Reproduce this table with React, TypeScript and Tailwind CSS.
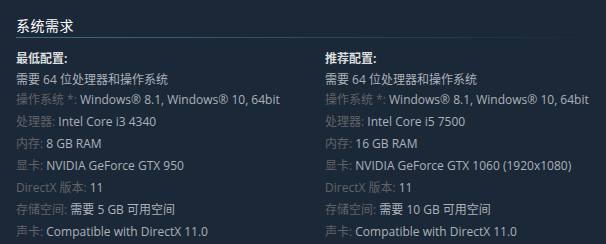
const MINIMO: [string, string][] = [
  ['操作系统 *:', 'Windows® 8.1, Windows® 10, 64bit'],
  ['处理器:', 'Intel Core i3 4340'],
  ['内存:', '8 GB RAM'],
  ['显卡:', 'NVIDIA GeForce GTX 950'],
  ['DirectX 版本:', '11'],
  ['存储空间:', '需要 5 GB 可用空间'],
  ['声卡:', 'Compatible with DirectX 11.0'],
];

const RECOMENDADO: [string, string][] = [
  ['操作系统 *:', 'Windows® 8.1, Windows® 10, 64bit'],
  ['处理器:', 'Intel Core i5 7500'],
  ['内存:', '16 GB RAM'],
  ['显卡:', 'NVIDIA GeForce GTX 1060 (1920x1080)'],
  ['DirectX 版本:', '11'],
  ['存储空间:', '需要 10 GB 可用空间'],
  ['声卡:', 'Compatible with DirectX 11.0'],
];

function Columna({ titulo, filas }: { titulo: string; filas: [string, string][] }) {
  return (
    <div>
      <div className="text-[12px] font-bold text-[#dcdedf] leading-[14px]">{titulo}</div>
      <div className="mt-[6px] text-[12px] text-[#acb2b8] leading-[16px]">需要 64 位处理器和操作系统</div>
      <ul className="mt-[4px]">
        {filas.map(([label, valor]) => (
          <li key={label} className="text-[12px] leading-[16px] mb-[6px] whitespace-nowrap">
            <span className="text-[#626366]">{label}</span>{' '}
            <span className="text-[#acb2b8]">{valor}</span>
          </li>
        ))}
      </ul>
    </div>
  );
}

export default function App() {
  return (
    <main
      className="w-[606px] h-[244px] bg-[#1b2838] pl-4 pt-[18px] overflow-hidden"
      style={{ fontFamily: '"Open Sans", "Noto Sans CJK SC", sans-serif' }}
    >
      {/* encabezado */}
      <h2 className="text-[14px] leading-[16px] tracking-[0.5px] text-[#ffffff] pb-[3px]">系统需求</h2>
      <div className="h-px bg-gradient-to-r from-[#3f6f8f] to-[#1b2838]" />

      {/* columnas */}
      <div className="grid grid-cols-[309px_1fr] pt-[14px]">
        <Columna titulo="最低配置:" filas={MINIMO} />
        <Columna titulo="推荐配置:" filas={RECOMENDADO} />
      </div>
    </main>
  );
}
